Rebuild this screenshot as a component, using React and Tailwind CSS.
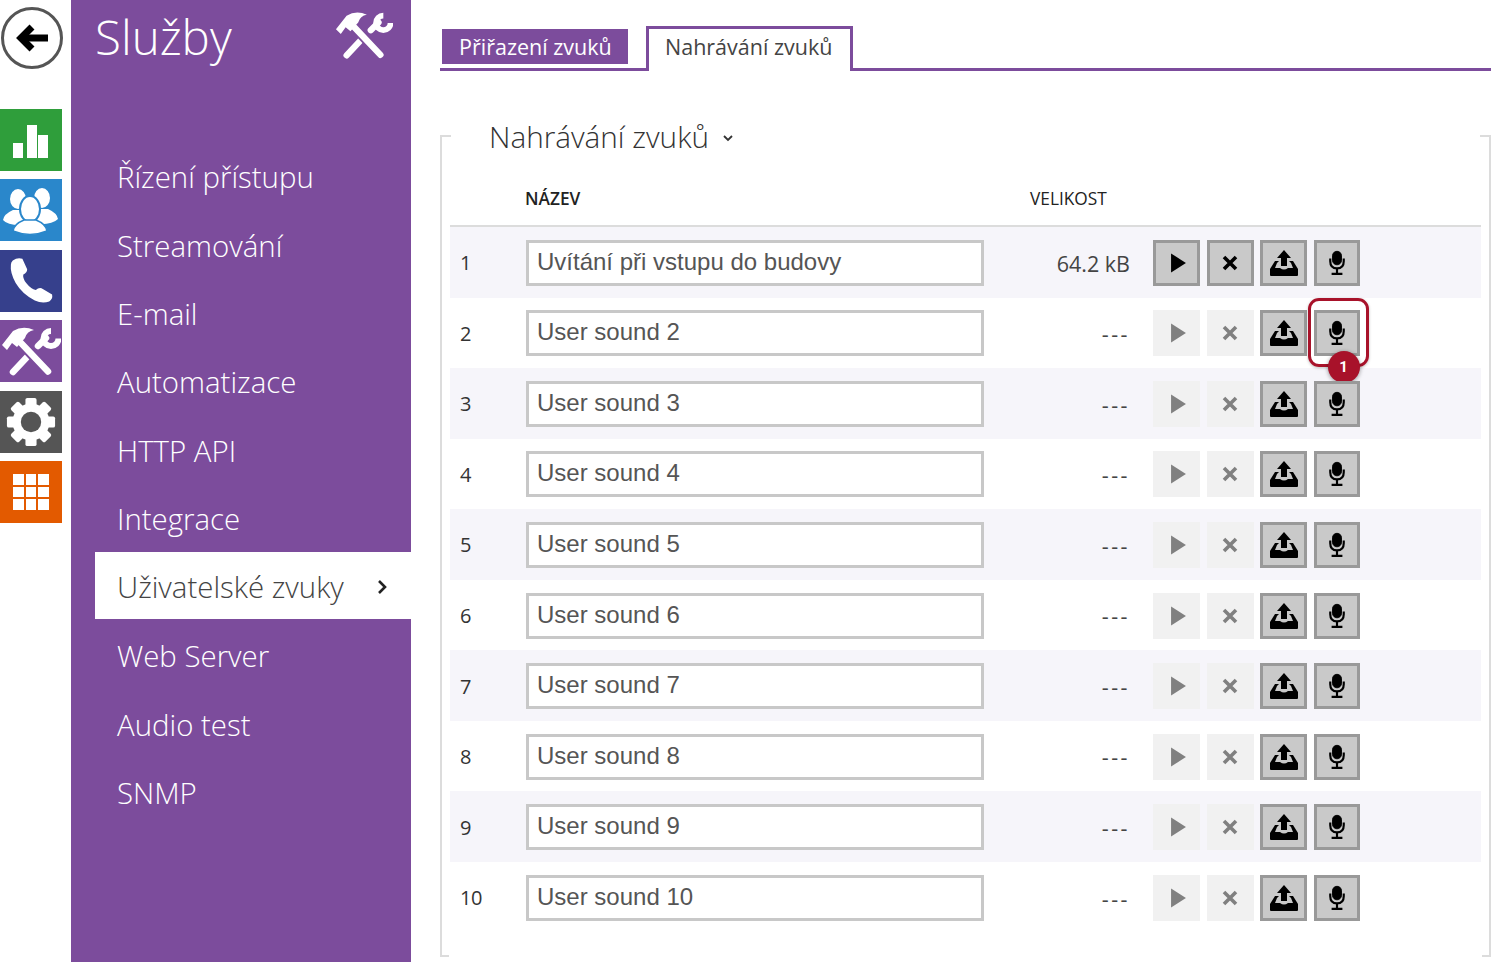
import React from 'react';

const menu = ['Řízení přístupu', 'Streamování', 'E-mail', 'Automatizace', 'HTTP API', 'Integrace', 'Uživatelské zvuky', 'Web Server', 'Audio test', 'SNMP'];
const sounds = ['Uvítání při vstupu do budovy', 'User sound 2', 'User sound 3', 'User sound 4', 'User sound 5', 'User sound 6', 'User sound 7', 'User sound 8', 'User sound 9', 'User sound 10'];

function ToolsIcon({ className }) {
  return (
    <svg viewBox="0 0 60 50" className={className} fill="none" strokeLinecap="round">
      <path d="M12 46 L27 30" stroke="white" strokeWidth="6.5" />
      <path d="M37 20 L45 12" stroke="white" strokeWidth="6.5" />
      <path d="M50 5 A7.5 7.5 0 1 0 57.5 12.5" stroke="white" strokeWidth="6" strokeLinecap="butt" />
      <path d="M20 17 L47 46" className="stroke-[#7c4c9c]" strokeWidth="10" strokeLinecap="butt" />
      <path d="M20 17 L47 45.5" stroke="white" strokeWidth="6.5" />
      <path d="M1 19 L12 5 Q22 -1 33 4 Q26 5 24 12 L16 21 L11 17 L6 24 Z" fill="white" />
    </svg>
  );
}

function BarsIcon() {
  return (
    <svg viewBox="0 0 36 36" className="w-[36px] h-[36px]" fill="white">
      <rect x="0" y="21" width="10" height="15" />
      <rect x="14" y="3" width="10" height="33" />
      <rect x="25" y="13" width="10" height="23" />
    </svg>
  );
}

function UsersIcon() {
  return (
    <svg viewBox="0 0 62 62" className="w-[62px] h-[62px]">
      <ellipse cx="18" cy="20" rx="8" ry="10" fill="white" />
      <path d="M3 41 Q4 35 13 31 L23 31 L24 46 Q8 47 3 41 Z" fill="white" />
      <ellipse cx="42" cy="19" rx="8" ry="10" fill="white" />
      <path d="M58 40 Q57 34 48 30 L38 30 L37 45 Q52 46 58 40 Z" fill="white" />
      <ellipse cx="30" cy="30" rx="10" ry="13" fill="white" className="stroke-[#2a87cb]" strokeWidth="2" />
      <path d="M13 52 Q14 45 24 41 L36 41 Q46 45 47 52 Q30 59 13 52 Z" fill="white" className="stroke-[#2a87cb]" strokeWidth="1.5" />
    </svg>
  );
}

function PhoneIcon() {
  return (
    <svg viewBox="0 0 48 54" preserveAspectRatio="none" className="w-[46px] h-[47px]" fill="white">
      <path d="M5 4 Q10 0 15 2 L20 14 Q20 18 16 20 Q15 24 19 30 Q24 37 29 38 Q32 35 35 36 L46 43 Q47 48 43 51 Q36 54 28 50 Q15 43 8 30 Q2 18 3 9 Q3 6 5 4 Z" />
    </svg>
  );
}

function GearIcon() {
  return (
    <svg viewBox="0 0 54 54" className="w-[50px] h-[50px]">
      <g fill="white">
        <circle cx="27" cy="27" r="20" />
        {[0, 45, 90, 135, 180, 225, 270, 315].map((a) => (
          <rect key={a} x="21" y="1" width="12" height="12" rx="2" transform={`rotate(${a} 27 27)`} />
        ))}
      </g>
      <circle cx="27" cy="27" r="11" className="fill-[#555555]" />
    </svg>
  );
}

function GridIcon() {
  return (
    <div className="grid grid-cols-3 gap-[2px] w-[36px] h-[36px]">
      {[1, 2, 3, 4, 5, 6, 7, 8, 9].map((i) => <div key={i} className="bg-white" />)}
    </div>
  );
}

function PlayIcon({ className }) {
  return (
    <svg viewBox="0 0 16 18" className={`w-[17px] h-[20px] ml-[3px] ${className}`} fill="currentColor">
      <path d="M1 0 L15 9 L1 18 Z" />
    </svg>
  );
}

function CrossIcon({ className }) {
  return (
    <svg viewBox="0 0 16 16" className={`w-[16px] h-[16px] ${className}`} stroke="currentColor" strokeWidth="3.6" fill="none">
      <path d="M2 2 L14 14 M14 2 L2 14" />
    </svg>
  );
}

function UploadIcon() {
  return (
    <svg viewBox="0 0 30 26" className="w-[30px] h-[26px]" fill="black">
      <path d="M15 0 L22 8 L18 8 L18 16 L12 16 L12 8 L8 8 Z" />
      <path d="M1 25 L1 19 L6 11 L10 11 L8 13 L6 18 L11 18 Q15 21 19 18 L24 18 L22 13 L20 11 L24 11 L29 19 L29 25 Q29 26 28 26 L2 26 Q1 26 1 25 Z" />
    </svg>
  );
}

function MicIcon() {
  return (
    <svg viewBox="0 0 20 28" className="w-[18px] h-[26px]" fill="none" stroke="black">
      <rect x="5" y="1" width="10" height="15" rx="5" fill="black" strokeWidth="1" />
      <path d="M2.5 9 L2.5 12 Q2.5 20 10 20 Q17.5 20 17.5 12 L17.5 9" strokeWidth="2.4" />
      <path d="M10 20 L10 25.5 M4 26 L16 26" strokeWidth="2.4" />
    </svg>
  );
}

function Btn({ off, children, className = 'w-[47px]' }) {
  return (
    <div className={`h-[46px] flex items-center justify-center ${className} ${off ? 'bg-[#f1f1f1]' : 'bg-[#c9c9c9] border-[3px] border-[#999999]'}`}>
      {children}
    </div>
  );
}

function SoundRow({ index, name }) {
  const first = index === 0;
  const shaded = index % 2 === 0;
  return (
    <div className={`flex items-center h-[70.55px] pt-[1px] ${shaded ? 'bg-[#f6f5fa]' : 'bg-white'}`}>
      <div className="w-[76px] pl-[10px] pt-[1px] text-[20px] text-[#333333] tracking-[-0.5px]">{index + 1}</div>
      <input
        readOnly
        value={name}
        className="w-[458px] h-[46px] border-[3px] border-[#c8c8c8] bg-white px-[8px] pb-[2px] text-[24px] text-[#555555] outline-none font-['Liberation_Sans',sans-serif]"
      />
      <div className={`w-[146px] text-right pt-[2px] text-[21.5px] text-[#444444] ${first ? '' : 'tracking-[2.5px]'}`}>{first ? '64.2 kB' : '---'}</div>
      <div className="ml-[23px] flex gap-[6.5px]">
        <Btn off={!first}><PlayIcon className={first ? 'text-black' : 'text-[#808080]'} /></Btn>
        <Btn off={!first}><CrossIcon className={first ? 'text-black' : 'text-[#808080]'} /></Btn>
        <Btn><UploadIcon /></Btn>
        <div className="relative">
          <Btn className="w-[46px]"><MicIcon /></Btn>
          {index === 1 && (
            <div className="absolute -left-[6px] -top-[12px] w-[61px] h-[69px] rounded-[11px] border-[3px] border-[#a8122a] shadow-[0_1px_3px_rgba(0,0,0,0.25)]">
              <div className="absolute left-[17px] top-[50px] w-[32px] h-[32px] rounded-full bg-[#a8122a] shadow-[0_1px_4px_rgba(0,0,0,0.4)] flex items-center justify-center text-white text-[15px] font-bold font-['Roboto',sans-serif]">1</div>
            </div>
          )}
        </div>
      </div>
    </div>
  );
}

export default function App() {
  return (
    <div className="flex w-[1497px] h-[962px] overflow-hidden bg-white font-['Open_Sans','Noto_Sans',sans-serif]">
      {/* levy pruh s ikonami */}
      <div className="w-[62px] shrink-0 flex flex-col">
        <div className="mt-[7px] ml-[1px] w-[62px] h-[62px] rounded-full border-[3px] border-[#555555] bg-white flex items-center justify-center">
          <svg viewBox="0 0 32 28" className="w-[32px] h-[28px]" fill="none" stroke="black" strokeWidth="7">
            <path d="M16 3 L5 14 L16 25" />
            <path d="M6 14 L32 14" />
          </svg>
        </div>
        <div className="mt-[40px] flex flex-col gap-[8.4px]">
          <div className="h-[62px] bg-[#2f9e3b] flex items-center justify-center"><BarsIcon /></div>
          <div className="h-[62px] bg-[#2a87cb] flex items-center justify-center"><UsersIcon /></div>
          <div className="h-[62px] bg-[#36408c] flex items-center justify-center"><PhoneIcon /></div>
          <div className="h-[62px] bg-[#7c4c9c] flex items-center justify-center"><ToolsIcon className="w-[60px] h-[50px]" /></div>
          <div className="h-[62px] bg-[#555555] flex items-center justify-center"><GearIcon /></div>
          <div className="h-[62px] bg-[#e35a00] flex items-center justify-center"><GridIcon /></div>
        </div>
      </div>

      {/* sluzby */}
      <div className="ml-[9px] w-[340px] shrink-0 bg-[#7c4c9c] text-white flex flex-col">
        <div className="h-[141px] pl-[24px] pr-[18px] flex items-start justify-between">
          <span className="text-[47.5px] font-light leading-[74px]">Služby</span>
          <ToolsIcon className="w-[58px] h-[50px] mt-[10px]" />
        </div>
        <div className="pl-[24px]">
          {menu.map((item, i) => (
            <div
              key={item}
              className={`pl-[22px] pr-[24px] pt-[4px] flex items-center justify-between text-[29.4px] font-light ${i === 6 ? 'h-[67px] mb-[1.45px] bg-white text-[#444444]' : 'h-[68.45px]'}`}
            >
              <span>{item}</span>
              {i === 6 && (
                <svg viewBox="0 0 10 16" className="w-[10px] h-[16px]" fill="none" stroke="#222222" strokeWidth="2.6">
                  <path d="M2 2 L8 8 L2 14" />
                </svg>
              )}
            </div>
          ))}
        </div>
      </div>

      {/* obsah */}
      <div className="pl-[29px] w-[1080px] shrink-0">
        <div className="mt-[26px] h-[45px] w-[1051px] flex items-end border-b-[3px] border-[#7c4c9c] pl-[2px]">
          <div className="mb-[4px] w-[186px] h-[35px] bg-[#7c4c9c] text-white text-[21.5px] pl-[17px] pt-[2px] flex items-center">Přiřazení zvuků</div>
          <div className="ml-[18px] -mb-[3px] w-[207px] h-[45px] bg-white border-[3px] border-b-0 border-[#7c4c9c] text-[#444444] text-[21.5px] pl-[16px] pb-[5px] flex items-center">Nahrávání zvuků</div>
        </div>

        <div className="relative flex flex-col mt-[64px] w-[1051px] h-[822px] border-x-2 border-[#dcdcdc] px-[8px]">
          <div className="absolute -left-[2px] top-0 w-[11px] h-[2px] bg-[#dcdcdc]" />
          <div className="absolute -right-[2px] top-0 w-[11px] h-[2px] bg-[#dcdcdc]" />
          <div className="absolute -left-[2px] bottom-0 w-[9px] h-[2px] bg-[#dcdcdc]" />
          <div className="absolute -right-[2px] bottom-0 w-[9px] h-[2px] bg-[#dcdcdc]" />
          <div className="-mt-[19px] pl-[39px] h-[42px] flex items-center gap-[14px] text-[29.7px] font-light text-[#333333]">
            <span>Nahrávání zvuků</span>
            <svg viewBox="0 0 10 7" className="w-[10px] h-[7px] mt-[2px]" fill="none" stroke="#333333" strokeWidth="1.8">
              <path d="M1 1 L5 5 L9 1" />
            </svg>
          </div>
          <div className="h-[69px] shrink-0 flex items-center border-b-2 border-[#dcdcdc] text-[17.3px] font-semibold text-[#222222] pt-[15px]">
            <span className="ml-[75px] w-[505px]">NÁZEV</span>
            <span className="font-medium">VELIKOST</span>
          </div>
          {sounds.map((name, i) => (
            <SoundRow key={i} index={i} name={name} />
          ))}
        </div>
      </div>
    </div>
  );
}
